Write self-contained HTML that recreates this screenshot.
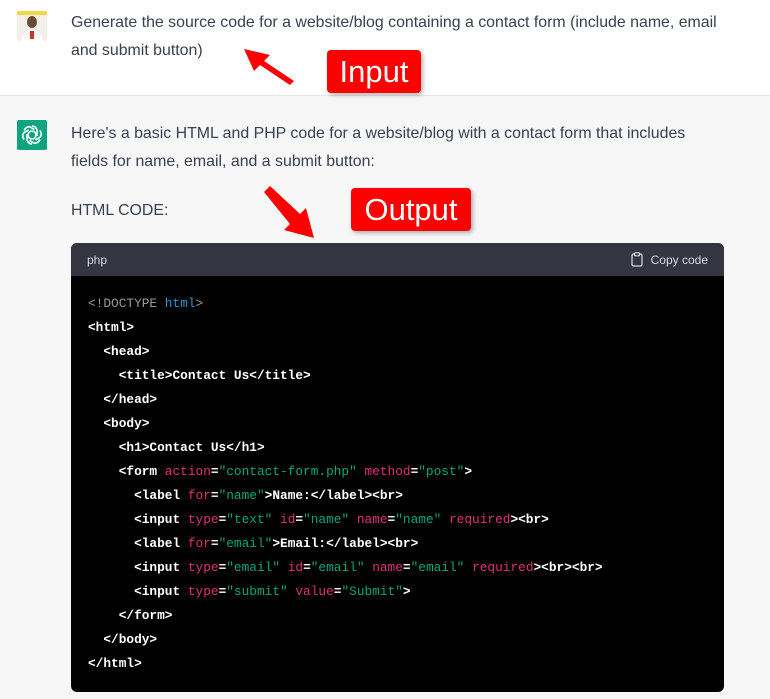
<!DOCTYPE html>
<html><head><style>
*{margin:0;padding:0;box-sizing:border-box}
body{width:770px;height:699px;overflow:hidden;background:#f7f7f8;font-family:"Liberation Sans",sans-serif;position:relative}
.top{position:absolute;left:0;top:0;width:770px;height:96px;background:#fff;border-bottom:1px solid #e5e5e5}
.t{position:absolute;left:71px;color:#374151;font-size:15.9px;line-height:28px;white-space:nowrap}
.av{position:absolute;left:17px;top:11px;width:30px;height:30px}
.lab{position:absolute;background:#f00;color:#fff;font-size:31px;border-radius:4px;text-align:center;box-shadow:2px 2px 4px rgba(0,0,0,.3)}
.code{position:absolute;left:71px;top:243px;width:653px;height:449px;background:#000;border-radius:6px;overflow:hidden}
.hd{height:33px;background:#343541;color:#d9d9e3;font-size:12px;line-height:35px;padding:0 16px;position:relative}
pre{font-family:"Liberation Mono",monospace;font-size:12.8px;line-height:24px;color:#fff;padding:16px 17px;font-weight:bold}
.a{color:#df3079;font-weight:normal}.s{color:#00a67d;font-weight:normal}.g{color:#999;font-weight:normal}.b{color:#2e95d3;font-weight:normal}
</style></head><body>
<div class="top"></div>
<svg class="av" viewBox="0 0 30 30"><rect width="30" height="30" fill="#f3f0e8"/><rect width="30" height="4" fill="#f2d84a"/><ellipse cx="15" cy="11" rx="5" ry="6" fill="#6b4a36"/><path d="M4 30 Q6 19 15 18 Q24 19 26 30Z" fill="#fff"/><rect x="13" y="20" width="4" height="8" fill="#c33"/></svg>
<div class="t" style="top:9px">Generate the source code for a website/blog containing a contact form (include name, email<br>and submit button)</div>
<svg style="position:absolute;left:240px;top:45px" width="60" height="40"><path d="M4 4 L30 10 L24 16 L54 36 L50 40 L20 20 L14 26Z" fill="#f00"/></svg>
<div class="lab" style="left:327px;top:50px;width:94px;height:43px;line-height:43px">Input</div>
<svg style="position:absolute;left:17px;top:120px" width="30" height="30" viewBox="0 0 30 30"><rect width="30" height="30" rx="2" fill="#10a37f"/><g fill="none" stroke="#fff" stroke-width="1.6"><circle cx="15" cy="15" r="4"/><path d="M15 6 a5 5 0 0 1 5 5 v5 M22.8 10.5 a5 5 0 0 1 0 7 l-4.3 2.5 M22.8 19.5 a5 5 0 0 1 -6 3.5 l-4.3 -2.5 M15 24 a5 5 0 0 1 -5 -5 v-5 M7.2 19.5 a5 5 0 0 1 0 -7 l4.3 -2.5 M7.2 10.5 a5 5 0 0 1 6 -3.5 l4.3 2.5"/></g></svg>
<div class="t" style="top:120px">Here's a basic HTML and PHP code for a website/blog with a contact form that includes<br>fields for name, email, and a submit button:</div>
<div class="t" style="top:197px">HTML CODE:</div>
<svg style="position:absolute;left:262px;top:186px" width="60" height="54"><path d="M2 6 L8 0 L38 28 L44 22 L52 52 L22 44 L28 38Z" fill="#f00"/></svg>
<div class="lab" style="left:351px;top:188px;width:120px;height:43px;line-height:43px">Output</div>
<div class="code"><div class="hd">php<span style="position:absolute;right:16px;top:0"><svg width="12" height="15" style="vertical-align:-3px;margin-right:8px" viewBox="0 0 12 15"><rect x="1" y="2" width="10" height="12" rx="1.5" fill="none" stroke="#d9d9e3" stroke-width="1.2"/><rect x="3.5" y="0.8" width="5" height="3" rx="0.8" fill="#343541" stroke="#d9d9e3" stroke-width="1.2"/></svg>Copy code</span></div>
<pre><span class="g">&lt;!DOCTYPE </span><span class="b">html</span><span class="g">&gt;</span>
&lt;html&gt;
  &lt;head&gt;
    &lt;title&gt;Contact Us&lt;/title&gt;
  &lt;/head&gt;
  &lt;body&gt;
    &lt;h1&gt;Contact Us&lt;/h1&gt;
    &lt;form <span class="a">action</span>=<span class="s">"contact-form.php"</span> <span class="a">method</span>=<span class="s">"post"</span>&gt;
      &lt;label <span class="a">for</span>=<span class="s">"name"</span>&gt;Name:&lt;/label&gt;&lt;br&gt;
      &lt;input <span class="a">type</span>=<span class="s">"text"</span> <span class="a">id</span>=<span class="s">"name"</span> <span class="a">name</span>=<span class="s">"name"</span> <span class="a">required</span>&gt;&lt;br&gt;
      &lt;label <span class="a">for</span>=<span class="s">"email"</span>&gt;Email:&lt;/label&gt;&lt;br&gt;
      &lt;input <span class="a">type</span>=<span class="s">"email"</span> <span class="a">id</span>=<span class="s">"email"</span> <span class="a">name</span>=<span class="s">"email"</span> <span class="a">required</span>&gt;&lt;br&gt;&lt;br&gt;
      &lt;input <span class="a">type</span>=<span class="s">"submit"</span> <span class="a">value</span>=<span class="s">"Submit"</span>&gt;
    &lt;/form&gt;
  &lt;/body&gt;
&lt;/html&gt;</pre></div>
</body></html>
